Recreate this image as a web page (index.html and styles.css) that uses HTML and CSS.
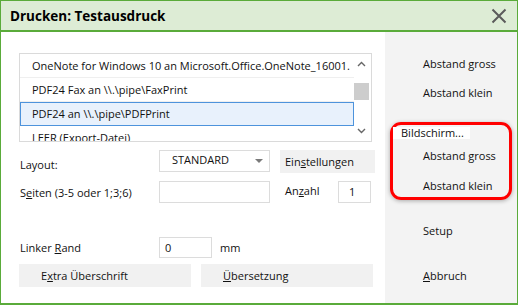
FILE: index.html
```html
<!DOCTYPE html>
<html lang="de">
<head>
    <meta charset="UTF-8">
    <title>Drucken: Testausdruck</title>
    <link rel="stylesheet" href="styles.css">
</head>
<body>
    <div class="window">
        <div class="titlebar">
            <span class="title">Drucken: Testausdruck</span>
            <svg class="close" width="16" height="16" viewBox="0 0 16 16">
                <path d="M1.5 1.5 L14.5 14.5 M14.5 1.5 L1.5 14.5" stroke="#5b5b5b" stroke-width="2" fill="none"/>
            </svg>
        </div>
        <div class="content">
            <div class="main">
                <div class="listbox">
                    <ul class="printers">
                        <li>OneNote for Windows 10 an Microsoft.Office.OneNote_16001.</li>
                        <li>PDF24 Fax an \\.\pipe\FaxPrint</li>
                        <li class="selected">PDF24 an \\.\pipe\PDFPrint</li>
                        <li>LEER (Export-Datei)</li>
                    </ul>
                    <div class="scrollbar">
                        <svg class="arrow" width="9" height="6" viewBox="0 0 9 6"><path d="M1 5 L4.5 1.5 L8 5" stroke="#666" stroke-width="1.4" fill="none"/></svg>
                        <div class="thumb"></div>
                        <svg class="arrow down" width="9" height="6" viewBox="0 0 9 6"><path d="M1 1 L4.5 4.5 L8 1" stroke="#666" stroke-width="1.4" fill="none"/></svg>
                    </div>
                </div>

                <div class="form-row row-layout">
                    <label class="lbl lbl-layout">Layout:</label>
                    <div class="select">
                        <span>STANDARD</span>
                        <svg width="10" height="6" viewBox="0 0 10 6"><path d="M1 1 L9 1 L5 5 Z" fill="#7a7a7a"/></svg>
                    </div>
                    <button class="btn btn-settings">Ein<u>s</u>tellungen</button>
                </div>

                <div class="form-row row-pages">
                    <label class="lbl">S<u>e</u>iten (3-5 oder 1;3;6)</label>
                    <div class="field field-pages"></div>
                    <label class="lbl lbl-count">An<u>z</u>ahl</label>
                    <div class="field field-count">1</div>
                </div>

                <div class="form-row row-margin">
                    <label class="lbl">Linker <u>R</u>and</label>
                    <div class="field field-margin">0</div>
                    <span class="unit">mm</span>
                </div>

                <div class="button-row">
                    <button class="btn btn-wide">E<u>x</u>tra Überschrift</button>
                    <button class="btn btn-wide"><u>Ü</u>bersetzung</button>
                </div>
            </div>

            <div class="side">
                <div class="side-btn">Abstand gross</div>
                <div class="side-btn gap-small">Abstand klein</div>
                <div class="group">
                    <span class="group-label">Bildschirm...</span>
                    <div class="side-btn group-btn first">Abstand gross</div>
                    <div class="side-btn group-btn second">Abstand klein</div>
                </div>
                <div class="side-btn setup">Setup</div>
                <div class="side-btn cancel"><u>A</u>bbruch</div>
            </div>
        </div>
    </div>
</body>
</html>
```

FILE: styles.css
```css
body {
    margin: 0;
    font-family: 'Open Sans', 'Noto Sans', sans-serif;
    font-size: 11px;
    color: #111;
    background: #fff;
}
.window {
    width: 518px;
    height: 305px;
    box-sizing: border-box;
    border: 1px solid #5aab3a;
    display: flex;
    flex-direction: column;
    overflow: hidden;
}
.titlebar {
    height: 29px;
    flex: none;
    background: #ddecd5;
    border-bottom: 2px solid #5aab3a;
    display: flex;
    align-items: center;
    justify-content: space-between;
    padding: 0 9px 0 9px;
}
.title {
    font-weight: bold;
    font-size: 13.5px;
    color: #000;
}
.close {
    margin-right: 1px;
}
.content {
    flex: 1;
    display: flex;
    border-bottom: 1px solid #5aab3a;
}
.main {
    width: 384px;
    flex: none;
    background: #fff;
    padding: 21px 0 0 18px;
    box-sizing: border-box;
}

/* printer list */
.listbox {
    width: 353px;
    height: 89px;
    box-sizing: border-box;
    border: 1px solid #dadada;
    display: flex;
    overflow: hidden;
}
.printers {
    list-style: none;
    margin: 0;
    padding: 0;
    width: 334px;
    flex: none;
}
.printers li {
    height: 23px;
    line-height: 23px;
    padding-left: 12px;
    border-bottom: 1px solid #efefef;
    white-space: nowrap;
    overflow: hidden;
}
.printers li.selected {
    background: #e8f1fc;
    border: 1px solid #4d93dc;
    height: 22px;
    line-height: 22px;
    padding-left: 11px;
}
.scrollbar {
    width: 15px;
    flex: none;
    display: flex;
    flex-direction: column;
    align-items: center;
    padding-top: 7px;
}
.thumb {
    width: 15px;
    height: 17px;
    background: #cdcdcd;
    margin-top: 16px;
}
.arrow.down {
    margin-top: 28px;
}

/* form rows */
.form-row {
    display: flex;
    align-items: center;
}
.lbl {
    width: 139px;
    flex: none;
    padding-left: 1px;
}
.lbl-layout {
    padding-top: 5px;
}
.row-layout {
    margin-top: 8px;
}
.select {
    width: 111px;
    height: 22px;
    box-sizing: border-box;
    border: 1px solid #dcdcdc;
    display: flex;
    align-items: center;
    justify-content: space-between;
    padding: 0 5px 0 12px;
    margin-top: -2px;
}
.select span {
    margin-top: -2px;
}
.btn {
    font-family: inherit;
    font-size: 11px;
    color: #111;
    background: #f1f1f1;
    border: none;
    padding: 0;
    text-align: left;
}
.btn-settings {
    width: 95px;
    height: 23px;
    margin-left: 10px;
    padding-left: 5px;
}
.row-pages {
    margin-top: 8px;
}
.field {
    height: 22px;
    box-sizing: border-box;
    border: 1px solid #dcdcdc;
    line-height: 20px;
}
.field-pages {
    width: 111px;
}
.lbl-count {
    width: 53px;
    padding-left: 15px;
    margin-top: -4px;
}
.field-count {
    width: 33px;
    padding-left: 10px;
}
.row-margin {
    margin-top: 34px;
}
.field-margin {
    width: 53px;
    height: 21px;
    padding-left: 5px;
}
.unit {
    margin-left: 8px;
}
.button-row {
    display: flex;
    gap: 10px;
    margin-top: 6px;
}
.btn-wide {
    width: 172px;
    height: 23px;
    padding-left: 22px;
}

/* right panel */
.side {
    flex: 1;
    background: #f3f3f3;
    padding-top: 20px;
}
.side-btn {
    height: 24px;
    line-height: 24px;
    padding-left: 38px;
}
.gap-small {
    margin-top: 5px;
}
.group {
    margin: 17px 0 0 5px;
    width: 122px;
    height: 78px;
    box-sizing: border-box;
    border: 3px solid #f00;
    border-radius: 11px;
    box-shadow: 0 1px 4px rgba(0, 0, 0, 0.3);
}
.group-label {
    display: inline-block;
    background: #fff;
    line-height: 12px;
    padding: 0 6px 0 8px;
}
.group-btn {
    height: 22px;
    line-height: 22px;
    padding-left: 30px;
}
.group-btn.first {
    margin-top: 5px;
}
.group-btn.second {
    margin-top: 8px;
}
.setup {
    margin-top: 19px;
}
.cancel {
    margin-top: 21px;
}
```
